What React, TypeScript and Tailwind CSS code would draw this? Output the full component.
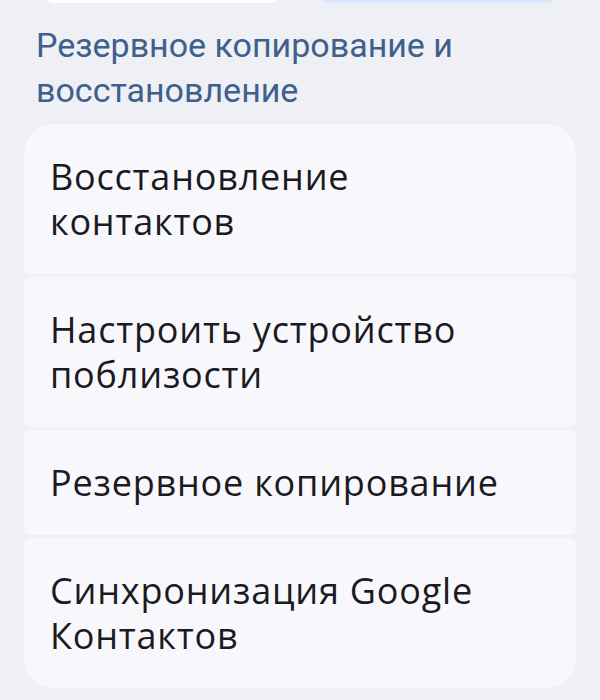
const rows = [
  ["Восстановление", "контактов"],
  ["Настроить устройство", "поблизости"],
  ["Резервное копирование"],
  ["Синхронизация Google", "Контактов"],
];

export default function App() {
  return (
    <div
      className="w-[600px] h-[700px] overflow-hidden bg-[#eef0f5]"
      style={{ fontFamily: "Roboto, 'Noto Sans', sans-serif" }}
    >
      {/* cut-off buttons from the section above */}
      <div className="h-[3px] overflow-hidden flex items-end gap-[36px] pl-[42px]">
        <div className="w-[240px] h-12 shrink-0 rounded-b-xl bg-white" />
        <div className="w-[240px] h-12 shrink-0 rounded-b-xl bg-[#dbe5fb]" />
      </div>

      <h2 className="mt-[20px] px-[36px] text-[34px] leading-[45px] text-[#3f5f8c]">
        Резервное копирование и восстановление
      </h2>

      <div className="mt-[11px] mx-[24px] flex flex-col gap-[3px] rounded-[30px] overflow-hidden">
        {rows.map((lines) => (
          <div
            key={lines.join(" ")}
            className="bg-[#f8f8fc] rounded-[6px] px-[26px] py-[30px] text-[36px] leading-[45px] tracking-[0.8px] text-[#1b1b1f]"
            style={{ fontFamily: "'Open Sans', 'Noto Sans', sans-serif" }}
          >
            {lines.map((line) => (
              <div key={line}>{line}</div>
            ))}
          </div>
        ))}
      </div>
    </div>
  );
}
